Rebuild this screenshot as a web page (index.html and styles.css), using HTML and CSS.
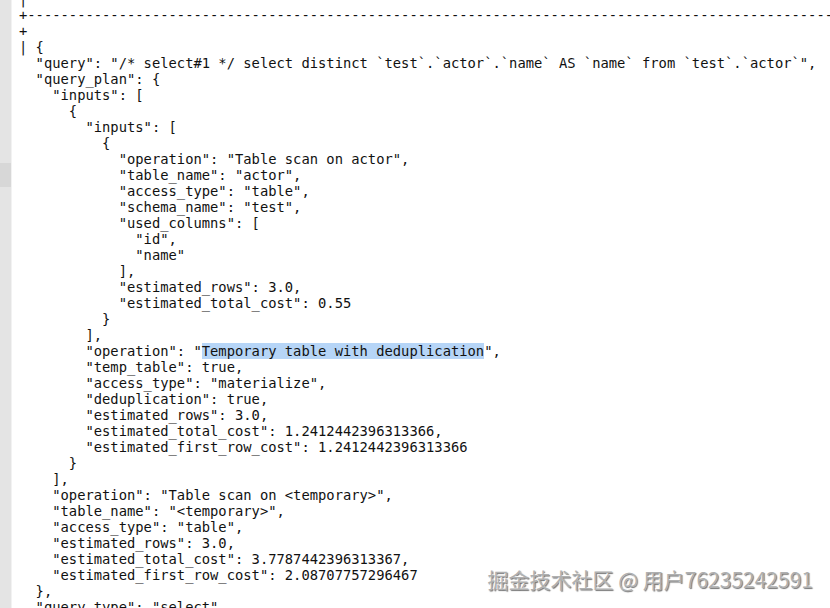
FILE: index.html
```html
<!DOCTYPE html>
<html>
<head>
<meta charset="utf-8">
<link rel="stylesheet" href="styles.css">
</head>
<body>
<div class="screen">
  <div class="gutter"><div class="gutter-mark"></div></div>
  <pre class="console">|
+--------------------------------------------------------------------------------------------------------------------------
+
| {
  "query": "/* select#1 */ select distinct `test`.`actor`.`name` AS `name` from `test`.`actor`",
  "query_plan": {
    "inputs": [
      {
        "inputs": [
          {
            "operation": "Table scan on actor",
            "table_name": "actor",
            "access_type": "table",
            "schema_name": "test",
            "used_columns": [
              "id",
              "name"
            ],
            "estimated_rows": 3.0,
            "estimated_total_cost": 0.55
          }
        ],
        "operation": "<span class="sel">Temporary table with deduplication</span>",
        "temp_table": true,
        "access_type": "materialize",
        "deduplication": true,
        "estimated_rows": 3.0,
        "estimated_total_cost": 1.2412442396313366,
        "estimated_first_row_cost": 1.2412442396313366
      }
    ],
    "operation": "Table scan on &lt;temporary&gt;",
    "table_name": "&lt;temporary&gt;",
    "access_type": "table",
    "estimated_rows": 3.0,
    "estimated_total_cost": 3.7787442396313367,
    "estimated_first_row_cost": 2.08707757296467
  },
  "query_type": "select"
</pre>
  <div class="watermark">掘金技术社区 @ 用户76235242591</div>
</div>
</body>
</html>
```
FILE: styles.css
```css
html, body {
  margin: 0;
  padding: 0;
  background: #ffffff;
}
.screen {
  position: relative;
  width: 830px;
  height: 608px;
  overflow: hidden;
  display: flex;
  background: #ffffff;
}
.gutter {
  width: 12px;
  flex: 0 0 12px;
  background: #e4e4e4;
  border-right: 1px solid #f2f2f2;
  padding-top: 163px;
  box-sizing: border-box;
}
.gutter-mark {
  height: 24px;
  background: #d7d7d7;
}
.console {
  flex: 1;
  margin: -9px 0 0 0;
  padding: 0 0 0 7px;
  font-family: "DejaVu Sans Mono", monospace;
  font-size: 13.8px;
  line-height: 16px;
  color: #111111;
  white-space: pre;
  overflow: hidden;
}
.sel {
  background: #b6d5f7;
}
.watermark {
  position: absolute;
  right: 17px;
  bottom: 16px;
  font-family: "Noto Sans CJK SC", sans-serif;
  font-size: 21px;
  line-height: 26px;
  color: #b0b0b0;
  text-shadow: -1px -1px 0 rgba(255,255,255,0.9), 1px 1px 1px rgba(0,0,0,0.55);
}
```
